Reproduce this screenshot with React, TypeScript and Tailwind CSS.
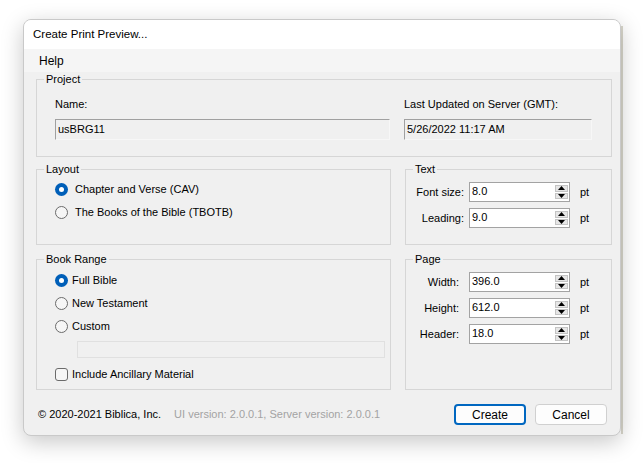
import React from "react";

const font = "font-['Liberation_Sans',Arial,sans-serif]";

const Radio = ({ checked, label, gap }: { checked?: boolean; label: string; gap: string }) => (
  <div className={`flex items-center h-[23px] ${gap}`}>
    {checked ? (
      <span className="w-[13px] h-[13px] rounded-full bg-[#005fb8] flex items-center justify-center shrink-0">
        <span className="w-[5px] h-[5px] rounded-full bg-white" />
      </span>
    ) : (
      <span className="w-[13px] h-[13px] rounded-full border border-[#6b6b6b] bg-[#f6f6f6] shrink-0" />
    )}
    <span>{label}</span>
  </div>
);

const Group = ({
  title,
  className,
  children,
}: {
  title: string;
  className: string;
  children: React.ReactNode;
}) => (
  <div className={`relative border border-[#d6d6d6] ${className}`}>
    <span className="absolute -top-[8px] left-[7px] px-[2px] bg-[#f0f0f0] leading-[14px]">{title}</span>
    {children}
  </div>
);

const Spin = ({ label, value, labelW }: { label: string; value: string; labelW: string }) => (
  <div className="flex items-center h-[20px]">
    <span className={`${labelW} text-right shrink-0`}>{label}</span>
    <div className="w-[101px] h-[20px] border border-[#a3a3a3] bg-white flex">
      <span className="flex-1 pl-[2px] leading-[14px] pt-[1px]">{value}</span>
      <div className="w-[13px] my-[2px] mr-[1px] flex flex-col gap-[1px]">
        <div className="flex-1 bg-[#e6e6e6] border border-[#c4c4c4] flex items-center justify-center">
          <svg width="7" height="4" viewBox="0 0 7 4">
            <path d="M0 4 L3.5 0 L7 4 Z" fill="#000" />
          </svg>
        </div>
        <div className="flex-1 bg-[#e6e6e6] border border-[#c4c4c4] flex items-center justify-center">
          <svg width="7" height="4" viewBox="0 0 7 4">
            <path d="M0 0 L3.5 4 L7 0 Z" fill="#000" />
          </svg>
        </div>
      </div>
    </div>
    <span className="ml-[10px]">pt</span>
  </div>
);

const ReadOnly = ({ value, w }: { value: string; w: string }) => (
  <div
    className={`${w} h-[21px] border border-t-[#a0a0a0] border-l-[#a0a0a0] border-b-[#f7f7f7] border-r-[#f7f7f7] bg-[#f0f0f0] pl-[2px] flex items-center`}
  >
    {value}
  </div>
);

export default function App() {
  return (
    <div className={`w-[644px] h-[463px] bg-white relative overflow-hidden pt-[19px] pl-[23px] ${font} text-[11px] text-black`}>
      {/* edge of the window behind */}
      <div className="absolute left-[621px] top-[26px] w-[2px] h-[408px] bg-[#d9d7cc]" />
      <div className="relative w-[598px] h-[417px] rounded-[8px] border border-[#c9c9c9] bg-[#f0f0f0] overflow-hidden shadow-[0_6px_22px_rgba(0,0,0,0.22)] flex flex-col">
        <div className="h-[29px] bg-white flex items-center pl-[9px] text-[11.5px] shrink-0">
          Create Print Preview...
        </div>
        <div className="h-[23px] bg-[#f5f5f5] flex items-center pl-[15px] text-[12px] shrink-0">Help</div>
        <div className="pl-[12px] pr-[8px] pt-[7px] flex flex-col">
          <Group title="Project" className="h-[78px] pt-[17px] pl-[18px]">
            <div className="flex gap-[14px]">
              <div className="flex flex-col gap-[8px]">
                <span className="leading-[14px]">Name:</span>
                <ReadOnly value="usBRG11" w="w-[335px]" />
              </div>
              <div className="flex flex-col gap-[8px]">
                <span className="leading-[14px]">Last Updated on Server (GMT):</span>
                <ReadOnly value="5/26/2022 11:17 AM" w="w-[188px]" />
              </div>
            </div>
          </Group>

          <div className="flex gap-[14px] mt-[12px]">
            <Group title="Layout" className="w-[355px] h-[76px] pt-[8px] pl-[18px]">
              <Radio checked label="Chapter and Verse (CAV)" gap="gap-[7px]" />
              <Radio label="The Books of the Bible (TBOTB)" gap="gap-[7px]" />
            </Group>
            <Group title="Text" className="w-[207px] h-[76px] pt-[12px] flex flex-col gap-[6px]">
              <Spin label="Font size:" value="8.0" labelW="w-[58px] mr-[5px]" />
              <Spin label="Leading:" value="9.0" labelW="w-[58px] mr-[5px]" />
            </Group>
          </div>

          <div className="flex gap-[14px] mt-[14px]">
            <Group title="Book Range" className="w-[355px] h-[131px] pt-[9px] pl-[18px]">
              <Radio checked label="Full Bible" gap="gap-[4px]" />
              <Radio label="New Testament" gap="gap-[4px]" />
              <Radio label="Custom" gap="gap-[4px]" />
              <div className="ml-[22px] mt-[3px] w-[308px] h-[17px] border border-[#e0e0e0] bg-[#f0f0f0]" />
              <div className="flex items-center h-[23px] gap-[4px] mt-[5px]">
                <span className="w-[13px] h-[13px] rounded-[3px] border border-[#6b6b6b] bg-[#f6f6f6]" />
                <span>Include Ancillary Material</span>
              </div>
            </Group>
            <Group title="Page" className="w-[207px] h-[131px] pt-[12px] flex flex-col gap-[6px]">
              <Spin label="Width:" value="396.0" labelW="w-[53px] mr-[10px]" />
              <Spin label="Height:" value="612.0" labelW="w-[53px] mr-[10px]" />
              <Spin label="Header:" value="18.0" labelW="w-[53px] mr-[10px]" />
            </Group>
          </div>

          <div className="flex items-center h-[21px] mt-[14px] pl-[2px] pr-[5px]">
            <span>© 2020-2021 Biblica, Inc.</span>
            <span className="ml-[13px] text-[#a3a3a3]">UI version: 2.0.0.1, Server version: 2.0.0.1</span>
            <div className="ml-auto flex gap-[9px]">
              <button className="w-[72px] h-[21px] rounded-[4px] border-2 border-[#0067c0] bg-[#fdfdfd] text-[12px] leading-none">
                Create
              </button>
              <button className="w-[72px] h-[21px] rounded-[4px] border border-[#d0d0d0] bg-[#fdfdfd] text-[12px] leading-none">
                Cancel
              </button>
            </div>
          </div>
        </div>
      </div>
    </div>
  );
}
